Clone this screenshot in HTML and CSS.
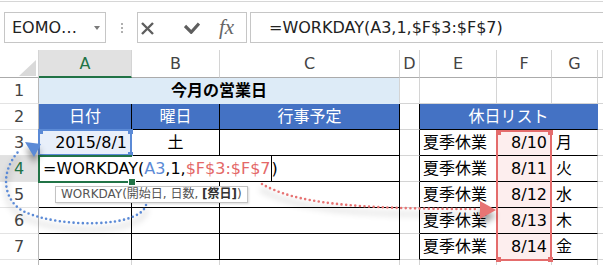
FILE: index.html
```html
<!DOCTYPE html>
<html lang="ja">
<head>
    <meta charset="UTF-8">
    <title>WORKDAY</title>
    <link rel="stylesheet" href="styles.css">
</head>
<body>
<div class="page">
    <!-- formula bar -->
    <div class="toolbar">
        <div class="namebox">EOMO…<span class="drop"></span></div>
        <div class="grip"><span></span></div>
        <div class="fnbox">
            <svg class="ico-x" width="13" height="13" viewBox="0 0 13 13"><path d="M1 1L12 12M12 1L1 12" stroke="#5e5e5e" stroke-width="2.4" fill="none"/></svg>
            <svg class="ico-ok" width="16" height="12" viewBox="0 0 16 12"><path d="M1 4L7.2 10.2L15 1.5" stroke="#5e5e5e" stroke-width="3.2" fill="none"/></svg>
            <span class="fx">fx</span>
        </div>
        <div class="formula">=WORKDAY(A3,1,$F$3:$F$7)</div>
    </div>

    <!-- sheet -->
    <div class="sheet">
        <div class="h corner"><span class="tri"></span></div>
        <div class="h on">A</div>
        <div class="h">B</div>
        <div class="h">C</div>
        <div class="h">D</div>
        <div class="h">E</div>
        <div class="h">F</div>
        <div class="h">G</div>
        <div class="h"></div>

        <div class="r">1</div>
        <div class="c title">今月の営業日</div>
        <div class="c"></div>
        <div class="c"></div>
        <div class="c"></div>
        <div class="c"></div>
        <div class="c"></div>

        <div class="r">2</div>
        <div class="c head">日付</div>
        <div class="c head">曜日</div>
        <div class="c head">行事予定</div>
        <div class="c kr"></div>
        <div class="c head wide">休日リスト</div>
        <div class="c"></div>

        <div class="r">3</div>
        <div class="c k num selfill">2015/8/1</div>
        <div class="c k mid">土</div>
        <div class="c k"></div>
        <div class="c kr"></div>
        <div class="c k">夏季休業</div>
        <div class="c k num pink">8/10</div>
        <div class="c k g">月</div>
        <div class="c"></div>

        <div class="r on">4</div>
        <div class="c k edit"><span class="edtext">=WORKDAY(<b class="ref-a">A3</b>,1,<b class="ref-f">$F$3:$F$7</b><i class="caret"></i>)</span></div>
        <div class="c k"></div>
        <div class="c k"></div>
        <div class="c kr"></div>
        <div class="c k">夏季休業</div>
        <div class="c k num pink">8/11</div>
        <div class="c k g">火</div>
        <div class="c"></div>

        <div class="r">5</div>
        <div class="c k"></div>
        <div class="c k"></div>
        <div class="c k"></div>
        <div class="c kr"></div>
        <div class="c k">夏季休業</div>
        <div class="c k num pink">8/12</div>
        <div class="c k g">水</div>
        <div class="c"></div>

        <div class="r">6</div>
        <div class="c k"></div>
        <div class="c k"></div>
        <div class="c k"></div>
        <div class="c kr"></div>
        <div class="c k">夏季休業</div>
        <div class="c k num pink">8/13</div>
        <div class="c k g">木</div>
        <div class="c"></div>

        <div class="r">7</div>
        <div class="c k"></div>
        <div class="c k"></div>
        <div class="c k"></div>
        <div class="c kr"></div>
        <div class="c k">夏季休業</div>
        <div class="c k num pink">8/14</div>
        <div class="c k g">金</div>
        <div class="c"></div>

        <div class="r"></div>
        <div class="c"></div>
        <div class="c"></div>
        <div class="c"></div>
        <div class="c"></div>
        <div class="c"></div>
        <div class="c"></div>
        <div class="c"></div>
        <div class="c"></div>
    </div>

    <!-- overlays -->
    <div class="range blue">
        <i class="hd tl"></i><i class="hd tr"></i><i class="hd br"></i>
    </div>
    <div class="range red">
        <i class="hd tl"></i><i class="hd tr"></i><i class="hd bl"></i><i class="hd br"></i>
    </div>
    <div class="active"><i class="fill"></i></div>

    <div class="tip">WORKDAY(開始日, 日数, <b>[祭日]</b>)</div>

    <svg class="arrows" width="603" height="265" viewBox="0 0 603 265">
        <g class="shadowed">
            <path d="M146 205C140 228 60 228 25 212C5 203 -2 175 18 152" stroke="#5b8ad6" stroke-width="2.6" stroke-linecap="round" stroke-dasharray="0 4.6" fill="none"/>
            <polygon points="25,142 41,144 34,157" fill="#5b8ad6"/>
            <path d="M262 184C295 203 350 209 478 209" stroke="#e77474" stroke-width="2.6" stroke-linecap="round" stroke-dasharray="0 4.6" fill="none"/>
            <polygon points="480,201 496,210 480,219" fill="#e77474"/>
        </g>
    </svg>
</div>
</body>
</html>
```

FILE: styles.css
```css
* {
    box-sizing: border-box;
}
body {
    margin: 0;
    background: #fff;
    font-family: "DejaVu Sans", "Noto Sans CJK JP", sans-serif;
    font-size: 16px;
    color: #000;
}
.page {
    position: relative;
    width: 603px;
    height: 265px;
    overflow: hidden;
}

/* formula bar */
.toolbar {
    display: flex;
    align-items: flex-start;
    height: 49px;
    margin-top: 1px;
    border-top: 1px solid #d6d6d6;
    padding: 10px 0 7px 4px;
}
.namebox {
    width: 102px;
    height: 31px;
    border: 1px solid #c6c6c6;
    display: flex;
    align-items: center;
    padding-left: 7px;
    color: #222;
}
.drop {
    margin-left: auto;
    margin-right: 5px;
    border-left: 3.5px solid transparent;
    border-right: 3.5px solid transparent;
    border-top: 4px solid #7a7a7a;
}
.grip {
    width: 31px;
    height: 31px;
    display: flex;
    justify-content: center;
    align-items: center;
}
.grip span {
    width: 2px;
    height: 10px;
    background: linear-gradient(#b0b0b0 50%, transparent 50%);
    background-size: 2px 4px;
}
.fnbox {
    width: 110px;
    height: 31px;
    border: 1px solid #c6c6c6;
    display: flex;
    align-items: center;
    padding-left: 3px;
}
.ico-x {
    margin-top: 1px;
}
.ico-ok {
    margin-left: 30px;
    margin-top: 1px;
}
.fx {
    margin-left: 19px;
    font-family: "Liberation Serif", serif;
    font-style: italic;
    font-size: 21px;
    color: #666;
    line-height: 1;
}
.formula {
    flex: 1;
    height: 31px;
    margin-left: 3px;
    border: 1px solid #c6c6c6;
    border-right: none;
    padding-left: 18px;
    line-height: 29px;
    color: #222;
    white-space: nowrap;
}

/* grid */
.sheet {
    display: grid;
    grid-template-columns: 39px 93px 88px 180px 20px 77px 55px 46px 5px;
    grid-template-rows: 28px repeat(8, 26px);
}
.h {
    border-right: 1px solid #d4d4d4;
    border-bottom: 1px solid #ababab;
    text-align: center;
    line-height: 28px;
    color: #444;
    overflow: hidden;
}
.h.on {
    background: #e1e1e1;
    color: #217346;
    border-bottom: 2px solid #217346;
}
.corner {
    display: flex;
    justify-content: flex-end;
    align-items: flex-end;
    padding: 0 2px 1px 0;
}
.tri {
    width: 0;
    height: 0;
    border-left: 17px solid transparent;
    border-bottom: 16px solid #d9d9d9;
}
.r {
    border-right: 1px solid #b8b8b8;
    border-bottom: 1px solid #e3e3e3;
    text-align: center;
    line-height: 26px;
    color: #444;
}
.r.on {
    background: #e1e1e1;
    color: #217346;
}
.c {
    border-right: 1px solid #d4d4d4;
    border-bottom: 1px solid #d4d4d4;
    padding: 0 3px;
    line-height: 25px;
    white-space: nowrap;
}
.k {
    border-color: #000;
}
.kr {
    border-right-color: #000;
}
.num {
    text-align: right;
    padding-right: 4px;
}
.mid {
    text-align: center;
}
.g {
    padding-left: 4px;
    border-right-color: #d4d4d4;
}
.title {
    grid-column: span 3;
    background: #ddebf7;
    border-bottom-color: #ddebf7;
    font-weight: bold;
    text-align: center;
}
.head {
    background: #4472c4;
    color: #fff;
    text-align: center;
    border-color: #000;
}
.head.wide {
    grid-column: span 3;
    border-right-color: #4472c4;
    border-bottom-color: #000;
}
.selfill {
    background: #e8effa;
}
.pink {
    background: #fdeeee;
}

/* cell being edited */
.edit {
    position: relative;
    z-index: 1;
    overflow: visible;
    padding-left: 4px;
}
.edtext {
    display: inline-block;
    height: 25px;
    background: #fff;
    padding-right: 4px;
}
.edtext b {
    font-weight: normal;
}
.ref-a {
    color: #5b8ad6;
}
.ref-f {
    color: #e46868;
}
.caret {
    display: inline-block;
    width: 1px;
    height: 25px;
    background: #000;
    vertical-align: top;
}

/* overlays */
.range {
    position: absolute;
    border: 2px solid;
}
.range.blue {
    left: 38px;
    top: 129px;
    width: 94px;
    height: 27px;
    border-color: #5b8ad6;
}
.range.red {
    left: 496px;
    top: 130px;
    width: 56px;
    height: 131px;
    border-color: #e46c6c;
}
.hd {
    position: absolute;
    width: 5px;
    height: 5px;
}
.blue .hd {
    background: #5b8ad6;
}
.red .hd {
    background: #e46c6c;
}
.hd.tl { left: -2px; top: -2px; }
.hd.tr { right: -3px; top: -2px; }
.hd.bl { left: -2px; bottom: -3px; }
.hd.br { right: -3px; bottom: -3px; }

.active {
    position: absolute;
    left: 38px;
    top: 155px;
    width: 94px;
    height: 28px;
    border: 2px solid #217346;
    border-right: none;
    z-index: 2;
}
.fill {
    position: absolute;
    right: -3px;
    bottom: -4px;
    width: 6px;
    height: 6px;
    background: #217346;
    outline: 1px solid #fff;
}
.tip {
    position: absolute;
    left: 55px;
    top: 186px;
    height: 17px;
    padding: 0 5px;
    background: #fff;
    border: 1px solid #c3c3c3;
    box-shadow: 1px 1px 2px rgba(0, 0, 0, 0.15);
    font-size: 12px;
    line-height: 15px;
    color: #555;
    white-space: nowrap;
    z-index: 3;
}
.tip b {
    color: #333;
}
.arrows {
    position: absolute;
    left: 0;
    top: 0;
    z-index: 4;
    pointer-events: none;
    overflow: visible;
}
.shadowed {
    filter: drop-shadow(0 6px 3px rgba(0, 0, 0, 0.4));
}
```
